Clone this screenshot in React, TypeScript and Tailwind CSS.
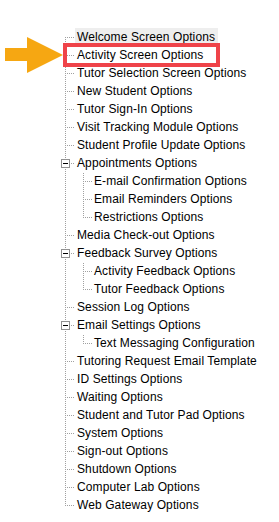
import React from "react";

type Item = { label: string; level: 0 | 1; expandable?: boolean; hover?: boolean };

const items: Item[] = [
  { label: "Welcome Screen Options", level: 0, hover: true },
  { label: "Activity Screen Options", level: 0 },
  { label: "Tutor Selection Screen Options", level: 0 },
  { label: "New Student Options", level: 0 },
  { label: "Tutor Sign-In Options", level: 0 },
  { label: "Visit Tracking Module Options", level: 0 },
  { label: "Student Profile Update Options", level: 0 },
  { label: "Appointments Options", level: 0, expandable: true },
  { label: "E-mail Confirmation Options", level: 1 },
  { label: "Email Reminders Options", level: 1 },
  { label: "Restrictions Options", level: 1 },
  { label: "Media Check-out Options", level: 0 },
  { label: "Feedback Survey Options", level: 0, expandable: true },
  { label: "Activity Feedback Options", level: 1 },
  { label: "Tutor Feedback Options", level: 1 },
  { label: "Session Log Options", level: 0 },
  { label: "Email Settings Options", level: 0, expandable: true },
  { label: "Text Messaging Configuration", level: 1 },
  { label: "Tutoring Request Email Template", level: 0 },
  { label: "ID Settings Options", level: 0 },
  { label: "Waiting Options", level: 0 },
  { label: "Student and Tutor Pad Options", level: 0 },
  { label: "System Options", level: 0 },
  { label: "Sign-out Options", level: 0 },
  { label: "Shutdown Options", level: 0 },
  { label: "Computer Lab Options", level: 0 },
  { label: "Web Gateway Options", level: 0 },
];

const DOT = "#a0a0a0";

type Seg = { x1: number; y1: number; x2: number; y2: number };

function dots(pageX: number, pageY: number, segs: Seg[]) {
  const out: React.ReactNode[] = [];
  segs.forEach((s, si) => {
    for (let x = s.x1; x <= s.x2; x++) {
      for (let y = s.y1; y <= s.y2; y++) {
        if ((pageX + x + pageY + y) % 2 === 0) {
          out.push(<rect key={`${si}-${x}-${y}`} x={x} y={y} width={1} height={1} fill={DOT} />);
        }
      }
    }
  });
  return out;
}

function TopGutter({
  rowTop,
  first,
  last,
  connector,
  expandable,
}: {
  rowTop: number;
  first: boolean;
  last: boolean;
  connector: boolean;
  expandable?: boolean;
}) {
  const segs: Seg[] = [];
  const vStart = first && connector ? 9 : 0;
  const vEnd = last && connector ? 9 : 17;
  if (expandable) {
    if (vStart < 5) segs.push({ x1: 4, y1: vStart, x2: 4, y2: 4 });
    if (vEnd > 13) segs.push({ x1: 4, y1: 14, x2: 4, y2: vEnd });
    segs.push({ x1: 9, y1: 9, x2: 13, y2: 9 });
  } else {
    segs.push({ x1: 4, y1: vStart, x2: 4, y2: vEnd });
    if (connector) segs.push({ x1: 5, y1: 9, x2: 13, y2: 9 });
  }
  return (
    <svg width={14} height={18} className="shrink-0 block" shapeRendering="crispEdges">
      {dots(61, rowTop, segs)}
      {expandable && (
        <g>
          <rect x={0.5} y={5.5} width={8} height={8} fill="#ffffff" stroke="#919191" />
          <rect x={2} y={9} width={5} height={1} fill="#000000" />
        </g>
      )}
    </svg>
  );
}

function ChildGutter({ rowTop, lastChild }: { rowTop: number; lastChild: boolean }) {
  const segs: Seg[] = [
    { x1: 8, y1: 0, x2: 8, y2: lastChild ? 9 : 17 },
    { x1: 9, y1: 9, x2: 16, y2: 9 },
  ];
  return (
    <svg width={17} height={18} className="shrink-0 block" shapeRendering="crispEdges">
      {dots(75, rowTop, segs)}
    </svg>
  );
}

export default function App() {
  const lastTopIndex = items.map((it) => it.level).lastIndexOf(0);
  return (
    <div
      className="relative w-[279px] h-[522px] bg-white overflow-hidden"
      style={{ fontFamily: '"Liberation Sans", Arial, sans-serif' }}
    >
      <div className="flex flex-col pt-[28px] pl-[61px]">
        {items.map((it, i) => {
          const rowTop = 28 + i * 18;
          const lastChild = it.level === 1 && (i + 1 >= items.length || items[i + 1].level === 0);
          return (
            <div key={it.label} className="flex h-[18px] items-center">
              {it.level === 0 ? (
                <TopGutter
                  rowTop={rowTop}
                  first={i === 0}
                  last={i === lastTopIndex}
                  connector
                  expandable={it.expandable}
                />
              ) : (
                <>
                  <TopGutter rowTop={rowTop} first={false} last={false} connector={false} />
                  <ChildGutter rowTop={rowTop} lastChild={lastChild} />
                </>
              )}
              <span
                className={`h-[18px] leading-[18px] text-[12px] tracking-[0.1px] text-black whitespace-nowrap pl-[2px] pr-[3px] ${
                  it.hover ? "bg-[#eeeeee]" : ""
                }`}
              >
                {it.label}
              </span>
            </div>
          );
        })}
      </div>

      <div className="absolute left-[63px] top-[43px] w-[157px] h-[24px] border-4 border-[#ef4349]" />

      <svg className="absolute left-0 top-0" width={70} height={80}>
        <polygon points="5,48 27,48 27,37 63,55 27,73 27,61 5,61" fill="#f6a712" />
      </svg>
    </div>
  );
}
